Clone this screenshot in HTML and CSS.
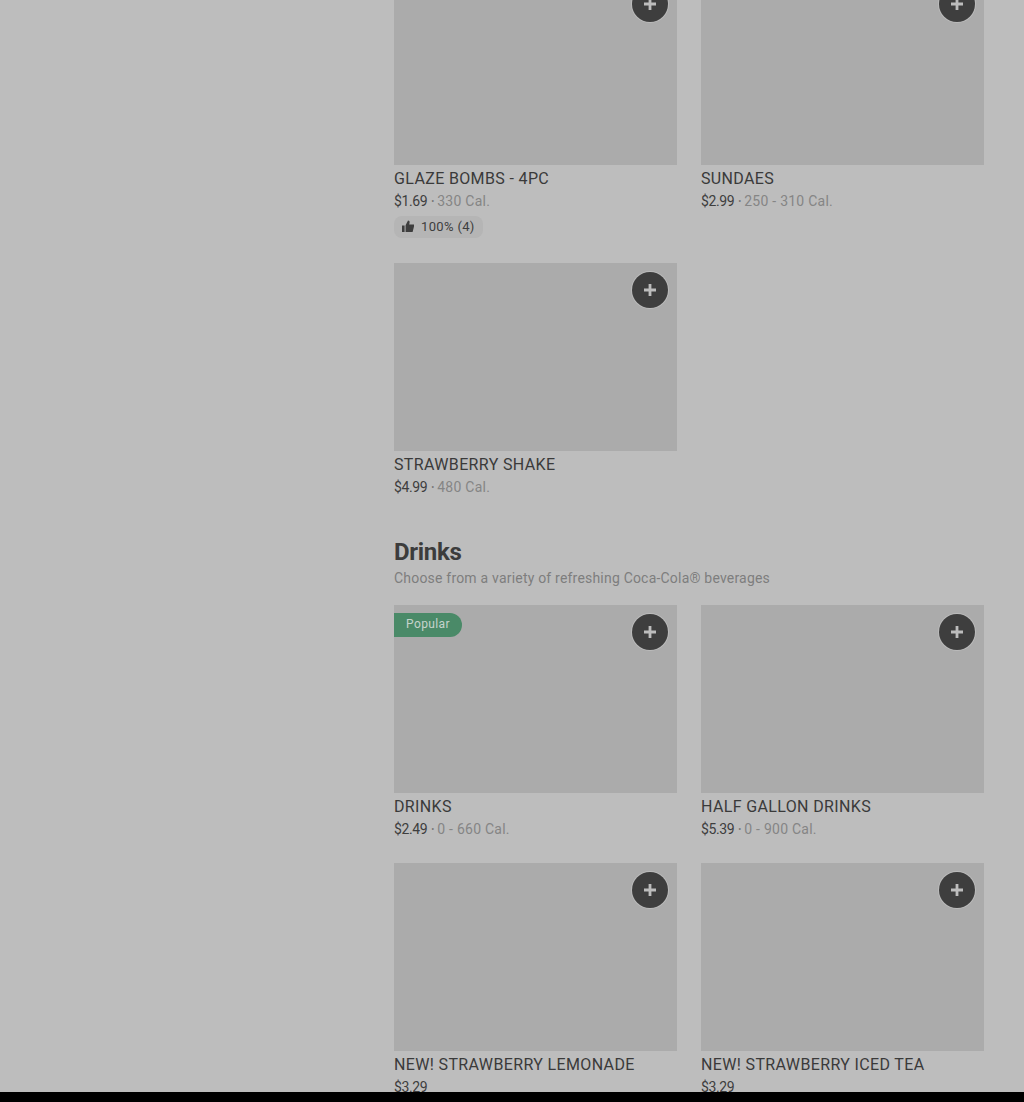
FILE: index.html
```html
<!DOCTYPE html>
<html lang="en">
<head>
<meta charset="utf-8">
<title>Menu</title>
<link rel="stylesheet" href="styles.css">
</head>
<body>
<div class="page">
  <main class="menu">
    <section class="section">
      <div class="grid">
        <article class="card">
          <div class="thumb"><button class="add" aria-label="Add"><svg viewBox="0 0 12 12" class="plus"><path d="M4.6 0h2.8v4.6H12v2.8H7.4V12H4.6V7.4H0V4.6h4.6z"/></svg></button></div>
          <h3 class="name">GLAZE BOMBS - 4PC</h3>
          <p class="meta"><span class="price">$1.69</span><span class="dot">•</span><span class="cal">330 Cal.</span></p>
          <div class="chip"><svg viewBox="0 0 12 12" class="thumbup"><path d="M0 5.5h2.6V12H0zM3.6 12V5.2L6 .4c1.2 0 1.8.8 1.6 2L7.2 4.4H12v2.2L10.6 12z"/></svg><span>100% (4)</span></div>
        </article>
        <article class="card">
          <div class="thumb"><button class="add" aria-label="Add"><svg viewBox="0 0 12 12" class="plus"><path d="M4.6 0h2.8v4.6H12v2.8H7.4V12H4.6V7.4H0V4.6h4.6z"/></svg></button></div>
          <h3 class="name">SUNDAES</h3>
          <p class="meta"><span class="price">$2.99</span><span class="dot">•</span><span class="cal">250 - 310 Cal.</span></p>
        </article>
        <article class="card">
          <div class="thumb"><button class="add" aria-label="Add"><svg viewBox="0 0 12 12" class="plus"><path d="M4.6 0h2.8v4.6H12v2.8H7.4V12H4.6V7.4H0V4.6h4.6z"/></svg></button></div>
          <h3 class="name">STRAWBERRY SHAKE</h3>
          <p class="meta"><span class="price">$4.99</span><span class="dot">•</span><span class="cal">480 Cal.</span></p>
        </article>
      </div>
    </section>
    <section class="section">
      <h2 class="heading">Drinks</h2>
      <p class="sub">Choose from a variety of refreshing Coca-Cola® beverages</p>
      <div class="grid">
        <article class="card">
          <div class="thumb"><span class="badge">Popular</span><button class="add" aria-label="Add"><svg viewBox="0 0 12 12" class="plus"><path d="M4.6 0h2.8v4.6H12v2.8H7.4V12H4.6V7.4H0V4.6h4.6z"/></svg></button></div>
          <h3 class="name">DRINKS</h3>
          <p class="meta"><span class="price">$2.49</span><span class="dot">•</span><span class="cal">0 - 660 Cal.</span></p>
        </article>
        <article class="card">
          <div class="thumb"><button class="add" aria-label="Add"><svg viewBox="0 0 12 12" class="plus"><path d="M4.6 0h2.8v4.6H12v2.8H7.4V12H4.6V7.4H0V4.6h4.6z"/></svg></button></div>
          <h3 class="name">HALF GALLON DRINKS</h3>
          <p class="meta"><span class="price">$5.39</span><span class="dot">•</span><span class="cal">0 - 900 Cal.</span></p>
        </article>
        <article class="card">
          <div class="thumb"><button class="add" aria-label="Add"><svg viewBox="0 0 12 12" class="plus"><path d="M4.6 0h2.8v4.6H12v2.8H7.4V12H4.6V7.4H0V4.6h4.6z"/></svg></button></div>
          <h3 class="name">NEW! STRAWBERRY LEMONADE</h3>
          <p class="meta"><span class="price">$3.29</span></p>
        </article>
        <article class="card">
          <div class="thumb"><button class="add" aria-label="Add"><svg viewBox="0 0 12 12" class="plus"><path d="M4.6 0h2.8v4.6H12v2.8H7.4V12H4.6V7.4H0V4.6h4.6z"/></svg></button></div>
          <h3 class="name">NEW! STRAWBERRY ICED TEA</h3>
          <p class="meta"><span class="price">$3.29</span></p>
        </article>
      </div>
    </section>
  </main>
</div>
</body>
</html>
```
FILE: styles.css
```css
* { box-sizing: border-box; }
html, body { margin: 0; height: 100%; background: #000; overflow: hidden; }
body { font-family: "Roboto", "Liberation Sans", sans-serif; color: #3e3e3e; }
.page { height: 1092px; background: #bdbdbd; overflow: hidden; display: flex; justify-content: flex-end; padding-right: 40px; }
.menu { width: 590px; margin-top: -23px; display: flex; flex-direction: column; gap: 39px; }
.grid { display: grid; grid-template-columns: 283px 283px; column-gap: 24px; row-gap: 24px; }
.section { display: flex; flex-direction: column; }
.card { display: flex; flex-direction: column; }
.thumb { position: relative; height: 188px; background: #ababab; }
.add { position: absolute; top: 9px; right: 9px; width: 36px; height: 36px; padding: 0; border: 0; border-radius: 50%; background: #3e3e3e; box-shadow: 0 0 0 1px #bbb; display: flex; align-items: center; justify-content: center; }
.plus { width: 12px; height: 12px; fill: #bdbdbd; }
.badge { position: absolute; top: 8px; left: 0; height: 24px; padding: 0 12px; border-radius: 0 12px 12px 0; background: #4a8a68; color: #c6d4cc; font-size: 12px; line-height: 23px; letter-spacing: .4px; }
.name { margin: 2px 0 0; font-size: 16px; line-height: 24px; font-weight: 450; color: #3a3a3a; letter-spacing: .36px; white-space: nowrap; }
.meta { margin: 0; font-size: 14px; line-height: 20px; display: flex; }
.price { color: #3e3e3e; letter-spacing: -.4px; }
.dot { color: #757575; margin: 0 3px 0 4px; font-size: 9px; }
.cal { color: #858585; letter-spacing: .25px; }
.chip { align-self: flex-start; margin: 5px 0 1px; height: 22px; padding: 0 8px 2px; border-radius: 8px; background: #b5b5b5; display: flex; align-items: center; gap: 7px; font-size: 13px; letter-spacing: .35px; color: #3e3e3e; }
.thumbup { width: 12px; height: 12px; fill: #3e3e3e; }
.heading { margin: 0; font-size: 24px; line-height: 32px; font-weight: 700; color: #3c3c3c; letter-spacing: -.3px; }
.sub { margin: 0 0 17px; font-size: 14px; line-height: 20px; color: #7e7e7e; letter-spacing: .2px; }
```
